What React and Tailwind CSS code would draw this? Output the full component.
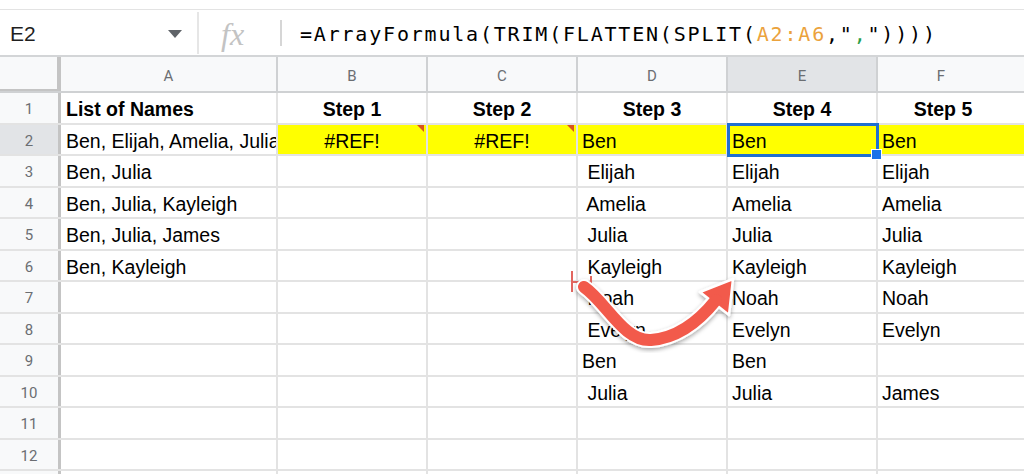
import React from 'react'

const rows = [
  { n: 1, a: 'List of Names', d: 'Step 3', e: 'Step 4', f: 'Step 5', b: 'Step 1', c: 'Step 2', head: true },
  { n: 2, a: 'Ben, Elijah, Amelia, Julia, Kayleigh, Noah, Evelyn', b: '#REF!', c: '#REF!', d: 'Ben', e: 'Ben', f: 'Ben', hi: true },
  { n: 3, a: 'Ben, Julia', d: ' Elijah', e: 'Elijah', f: 'Elijah' },
  { n: 4, a: 'Ben, Julia, Kayleigh', d: ' Amelia', e: 'Amelia', f: 'Amelia' },
  { n: 5, a: 'Ben, Julia, James', d: ' Julia', e: 'Julia', f: 'Julia' },
  { n: 6, a: 'Ben, Kayleigh', d: ' Kayleigh', e: 'Kayleigh', f: 'Kayleigh' },
  { n: 7, d: ' Noah', e: 'Noah', f: 'Noah' },
  { n: 8, d: ' Evelyn', e: 'Evelyn', f: 'Evelyn' },
  { n: 9, d: 'Ben', e: 'Ben' },
  { n: 10, d: ' Julia', e: 'Julia', f: 'James' },
  { n: 11 },
  { n: 12 },
  { n: 13 },
]

function ErrorMark() {
  return (
    <span className="absolute right-[2px] top-0 h-0 w-0 border-l-[7px] border-t-[7px] border-l-transparent border-t-[#d9541e]" />
  )
}

function Cell({ w, children, center, bold, yellow, error }) {
  return (
    <div
      className={`relative flex h-full shrink-0 items-center overflow-hidden whitespace-pre border-r-2 border-[#e3e3e3] px-[4px] pt-[3px] ${w} ${
        center ? 'justify-center' : ''
      } ${bold ? 'font-bold' : ''} ${yellow ? 'bg-[#ffff00]' : ''}`}
    >
      {children}
      {error && <ErrorMark />}
    </div>
  )
}

function Row({ r }) {
  return (
    <div className="flex h-[31.5px] border-b-2 border-[#e3e3e3] text-[19.5px] leading-[22px] text-black">
      <div
        className={`flex h-full w-[61px] shrink-0 items-center justify-center border-r-[3px] border-[#c4c4c4] pt-[3px] font-['Roboto',sans-serif] text-[15px] text-[#6b6e72] ${
          r.hi ? 'bg-[#e2e4e7]' : 'bg-[#f8f9fa]'
        }`}
      >
        {r.n}
      </div>
      <div className={`flex h-full w-[217px] shrink-0 items-center overflow-hidden whitespace-nowrap border-r-2 border-[#e3e3e3] pl-[5px] pt-[3px] ${r.head ? 'font-bold' : ''}`}>
        {r.a}
      </div>
      <Cell w="w-[150px]" center bold={r.head} yellow={r.hi} error={r.hi}>{r.b}</Cell>
      <Cell w="w-[150px]" center bold={r.head} yellow={r.hi} error={r.hi}>{r.c}</Cell>
      <Cell w="w-[150px]" center={r.head} bold={r.head} yellow={r.hi}>{r.d}</Cell>
      <Cell w="w-[150px]" center={r.head} bold={r.head} yellow={r.hi}>{r.e}</Cell>
      <div className={`flex h-full flex-1 items-center whitespace-pre px-[4px] pt-[3px] ${r.head ? 'justify-center pr-[20px] font-bold' : ''} ${r.hi ? 'bg-[#ffff00]' : ''}`}>
        {r.f}
      </div>
    </div>
  )
}

function ColHead({ w, label, active }) {
  return (
    <div
      className={`flex h-full shrink-0 items-center justify-center border-r-2 border-[#cfd1d3] pt-[4px] ${w} ${
        active ? 'bg-[#e2e4e7]' : 'bg-[#f8f9fa]'
      }`}
    >
      {label}
    </div>
  )
}

export default function App() {
  return (
    <div className="relative h-[474px] w-[1024px] overflow-hidden bg-white font-['Liberation_Sans',Arial,sans-serif]">
      <div className="h-[10px] border-b border-[#e3e3e3]" />

      {/* formula bar */}
      <div className="flex h-[47px] items-center border-b-2 border-[#d3d5d7]">
        <div className="w-[168px] pl-[10px] pt-[2px] text-[21px] text-[#1f1f1f]">E2</div>
        <svg width="14" height="8" viewBox="0 0 14 8" className="mt-[3px]">
          <path d="M0 0 H14 L7 8 Z" fill="#5f6368" />
        </svg>
        <div className="ml-[15px] h-[42px] w-[2px] bg-[#e6e6e6]" />
        <div className="ml-[22px] w-[59px] pt-[2px] font-['Liberation_Serif',serif] text-[32px] italic leading-none text-[#c3c3c3]">
          fx
        </div>
        <div className="h-[26px] w-[2px] bg-[#d6d6d6]" />
        <div className="ml-[18px] pt-[2px] font-['DejaVu_Sans_Mono',monospace] text-[20px] tracking-[1.8px] text-black">
          =ArrayFormula(TRIM(FLATTEN(SPLIT(<span className="text-[#eba23c]">A2:A6</span>,"
          <span className="text-[#2a9d4a]">,</span>"))))
        </div>
      </div>

      {/* column headers */}
      <div className="flex h-[36px] border-b-2 border-[#cfd1d3] font-['Roboto',sans-serif] text-[15px] text-[#6b6e72]">
        <div className="h-full w-[61px] shrink-0 border-b-[2px] border-r-[4px] border-[#c4c4c4] bg-[#f8f9fa]" />
        <ColHead w="w-[217px]" label="A" />
        <ColHead w="w-[150px]" label="B" />
        <ColHead w="w-[150px]" label="C" />
        <ColHead w="w-[150px]" label="D" />
        <ColHead w="w-[150px]" label="E" active />
        <div className="flex h-full flex-1 items-center justify-center bg-[#f8f9fa] pr-[20px] pt-[4px]">F</div>
      </div>

      {rows.map((r) => (
        <Row key={r.n} r={r} />
      ))}

      {/* selection on E2 */}
      <div className="absolute left-[727px] top-[123px] h-[34px] w-[152px] border-[3px] border-[#1f6fd1]" />
      <div className="absolute left-[871px] top-[149px] h-[11px] w-[11px] border border-white bg-[#1a73e8]" />

      {/* annotation arrow */}
      <svg className="pointer-events-none absolute left-0 top-0" width="1024" height="474" viewBox="0 0 1024 474">
        <defs>
          <filter id="sh" x="-20%" y="-20%" width="140%" height="140%">
            <feDropShadow dx="0" dy="2" stdDeviation="2" floodColor="#000" floodOpacity="0.35" />
          </filter>
        </defs>
        <path d="M572 271 V292 M572 282 H591 M591 276 V289" stroke="#e2665f" strokeWidth="2" fill="none" />
        <g filter="url(#sh)">
          <path
            d="M584 287 C606 302 624 342 651 340 C678 338 700 320 714 302"
            stroke="#ffffff"
            strokeWidth="16"
            fill="none"
            strokeLinecap="round"
          />
          <path d="M733 279 L700 292 L729 315 Z" fill="#f25a4c" stroke="#ffffff" strokeWidth="2.5" strokeLinejoin="round" />
          <path
            d="M584 287 C606 302 624 342 651 340 C678 338 700 320 716 300"
            stroke="#f25a4c"
            strokeWidth="12"
            fill="none"
            strokeLinecap="round"
          />
        </g>
      </svg>
    </div>
  )
}
